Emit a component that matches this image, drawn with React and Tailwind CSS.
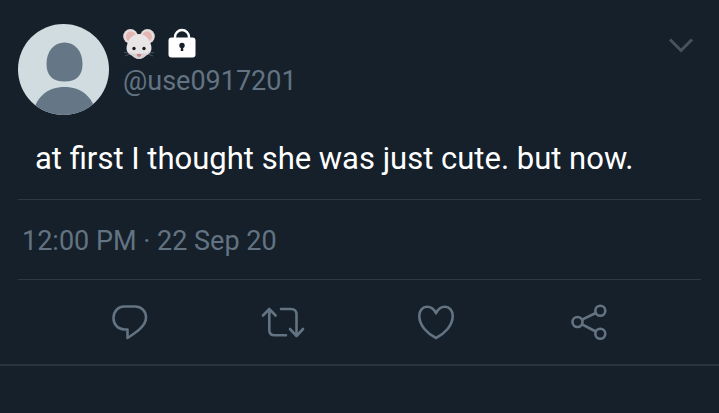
function Avatar() {
  return (
    <svg
      viewBox="0 0 91 91"
      className="size-[91px] shrink-0 rounded-full bg-[#d0dce0]"
      role="img"
      aria-label="Default avatar"
    >
      <path
        fill="#657786"
        d="M46.500 18.500C57 18.500 64.500 27 64.500 40C64.500 52 58 57.500 46.500 57.500C35 57.500 28.500 52 28.500 40C28.500 27 36 18.500 46.500 18.500Z"
      />
      <path
        fill="#657786"
        d="M15 91C17 73 30 63 46.500 63C63 63 76 73 78 91Z"
      />
    </svg>
  );
}

function MouseEmoji() {
  return (
    <svg viewBox="0 0 32 32" className="size-8" role="img" aria-label="Mouse">
      <g stroke="#46525c" strokeWidth="1">
        <path d="M7 25L1 24.500M7 26L2 28M25 25L31 24.500M25 26L30 28" />
      </g>
      <g fill="#e6dcdc">
        <circle cx="7.500" cy="8.300" r="7.300" />
        <circle cx="24.500" cy="8.300" r="7.300" />
      </g>
      <g fill="#e3b5b3">
        <circle cx="8" cy="8.600" r="5" />
        <circle cx="24" cy="8.600" r="5" />
      </g>
      <path
        fill="#e9e5e7"
        d="M16 6C22 6 26 10 28 17C29.500 23 27 25.500 23 27.500C20 30.500 18 30.800 16 30.800C14 30.800 12 30.500 9 27.500C5 25.500 2.500 23 4 17C6 10 10 6 16 6Z"
      />
      <path
        fill="#d6cfd3"
        d="M4.500 23.500C9 26 12 25.500 16 25.500C20 25.500 23 26 27.500 23.500C26.500 25.500 25 26.500 23 27.500C20 30.500 18 30.800 16 30.800C14 30.800 12 30.500 9 27.500C7 26.500 5.500 25.500 4.500 23.500Z"
      />
      <circle cx="11" cy="20.500" r="1.700" fill="#1d1a1c" />
      <circle cx="21" cy="20.500" r="1.700" fill="#1d1a1c" />
      <path fill="#c98583" d="M13.500 26.500Q16 25 18.500 26.500Q18 28.500 16 29Q14 28.500 13.500 26.500Z" />
    </svg>
  );
}

function LockBadge() {
  return (
    <svg viewBox="0 0 30 32" className="h-8 w-[30px]" role="img" aria-label="Protected account">
      <path d="M8 11V9a7 7 0 0 1 14 0V11" fill="none" stroke="#fff" strokeWidth="2.400" />
      <rect x="1.500" y="9.500" width="27" height="20" rx="3" fill="#fff" />
      <circle cx="15" cy="17.500" r="2.700" fill="#15202b" />
      <path d="M14 18h2l.3 5h-2.600z" fill="#15202b" />
    </svg>
  );
}

const actions = [
  {
    label: "Reply",
    shape: (
      <path d="M16 6.500H27C33.500 6.500 38 11 38 17.500C38 26 28 32.500 19.500 38V29.500H16.500C10 29.500 5.500 24.500 5.500 18C5.500 11.500 10 6.500 16 6.500Z" />
    ),
  },
  {
    label: "Retweet",
    shape: (
      <>
        <path d="M2 15.500L8.300 9L14.600 15.500M8.300 9V30Q8.300 35.300 13.500 35.300H25" />
        <path d="M29 29L35.500 36L42 29M35.500 36V14.500Q35.500 9 30 9H20" />
      </>
    ),
  },
  {
    label: "Like",
    shape: (
      <path d="M22 13.300C20 9 16.500 6.800 13 6.800C8.500 6.800 5.300 10.500 5.300 16C5.300 26 14 34 22 38C30 34 38.700 26 38.700 16C38.700 10.500 35.500 6.800 31 6.800C27.500 6.800 24 9 22 13.300Z" />
    ),
  },
  {
    label: "Share",
    shape: (
      <>
        <circle cx="10.500" cy="22" r="5" />
        <circle cx="33.300" cy="10.700" r="5" />
        <circle cx="33.300" cy="33.800" r="5" />
        <path d="M15 19.700L28.800 13M15 24.300L28.800 31.500" />
      </>
    ),
  },
];

function App() {
  return (
    <main className="min-h-screen bg-[#15202b] font-['Roboto',sans-serif] text-[#637381]">
      <article className="border-b-2 border-[#28343e] px-[18px] pt-6">
        <header className="flex items-start gap-[14px]">
          <Avatar />
          <div className="flex-1 pt-1">
            <div className="flex items-center gap-3">
              <MouseEmoji />
              <LockBadge />
            </div>
            <a href="#profile" className="block pt-[5px] text-[27px] leading-8">
              @use0917201
            </a>
          </div>
          <button type="button" aria-label="More options" className="pt-2 text-[#46535f]">
            <svg
              viewBox="0 0 42 26"
              className="h-[26px] w-[42px]"
              fill="none"
              stroke="currentColor"
              strokeWidth="3"
            >
              <path d="M11 7.500L22 18.500L33 7.500" />
            </svg>
          </button>
        </header>

        <p className="px-[17px] pt-6 pb-5 text-[31px] leading-10 text-white">
          at first I thought she was just cute. but now.
        </p>

        <div className="border-y border-[#2d3943] px-1 pt-[22px] pb-[18px] text-[27px] leading-[39px]">
          <time dateTime="2020-09-22T12:00">12:00 PM · 22 Sep 20</time>
        </div>

        <div className="grid grid-cols-4 px-9 py-5">
          {actions.map(({ label, shape }) => (
            <button key={label} type="button" aria-label={label} className="flex justify-center">
              <svg
                viewBox="0 0 44 44"
                className="size-11"
                fill="none"
                stroke="currentColor"
                strokeWidth="2.600"
                strokeLinecap="round"
                strokeLinejoin="round"
              >
                {shape}
              </svg>
            </button>
          ))}
        </div>
      </article>
    </main>
  );
}

export default App;
